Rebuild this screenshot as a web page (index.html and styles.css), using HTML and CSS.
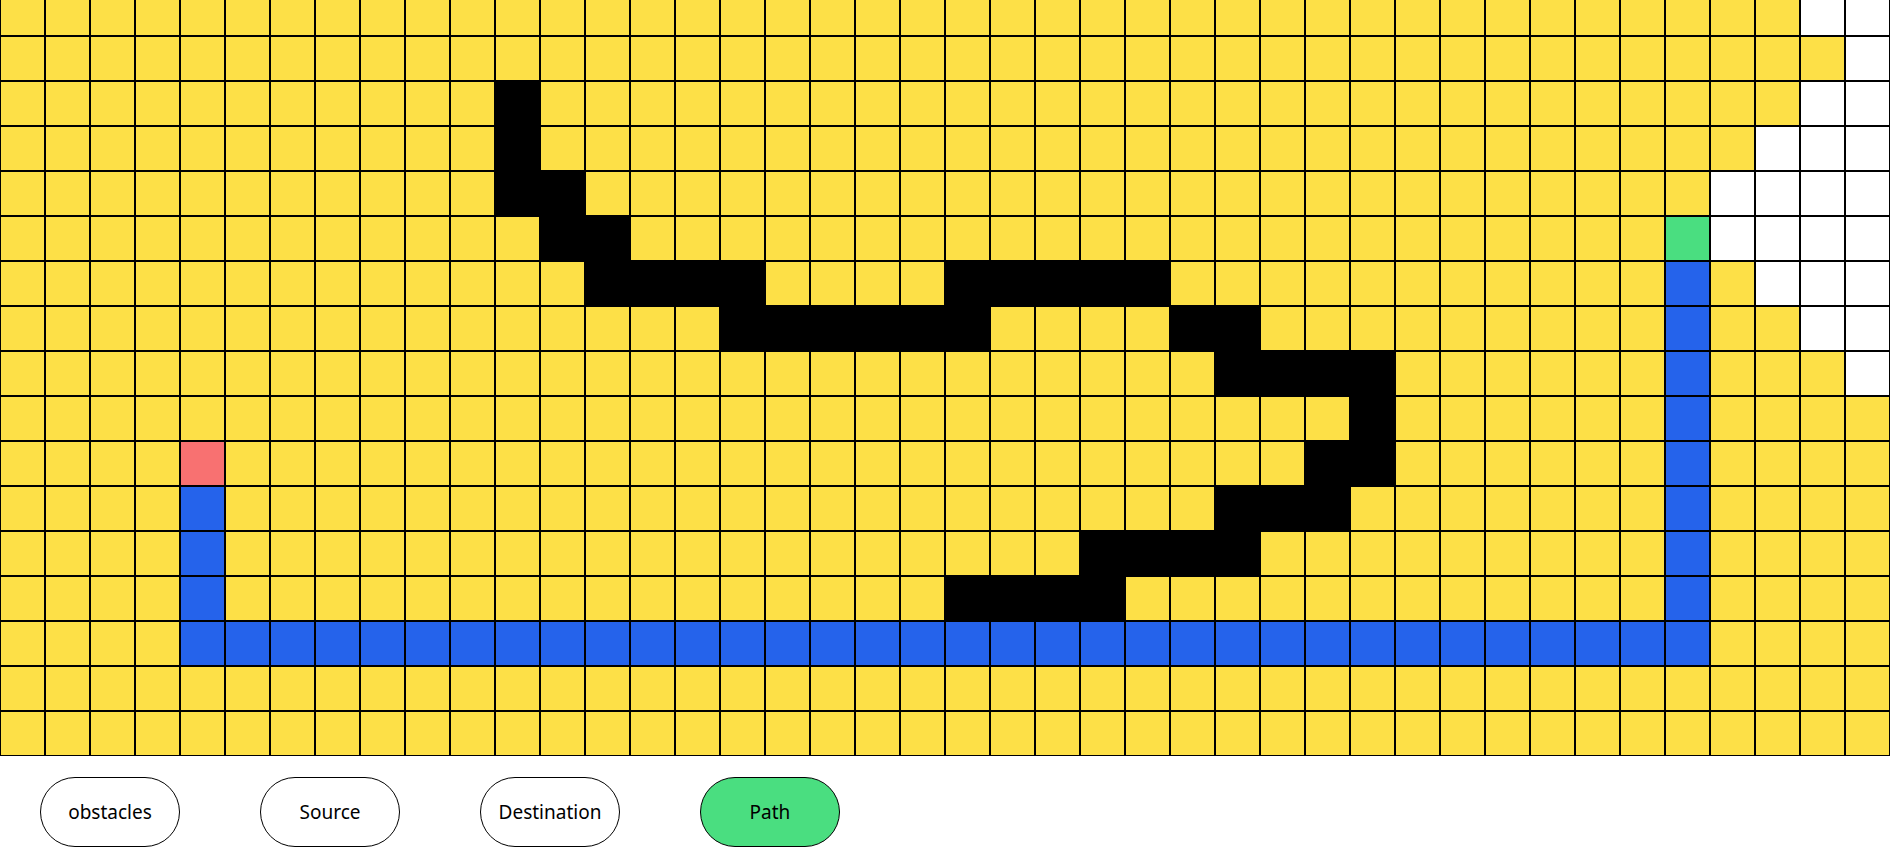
FILE: index.html
```html
<!DOCTYPE html>
<html lang="en">
<head>
<meta charset="utf-8">
<title>Path Finder</title>
<link rel="stylesheet" href="styles.css">
</head>
<body>
<main class="board">
<div class="row"><span></span><span></span><span></span><span></span><span></span><span></span><span></span><span></span><span></span><span></span>
<span></span><span></span><span></span><span></span><span></span><span></span><span></span><span></span><span></span><span></span>
<span></span><span></span><span></span><span></span><span></span><span></span><span></span><span></span><span></span><span></span>
<span></span><span></span><span></span><span></span><span></span><span></span><span></span><span></span><span></span><span></span>
<span class="empty"></span><span class="empty"></span></div>

<div class="row"><span></span><span></span><span></span><span></span><span></span><span></span><span></span><span></span><span></span><span></span>
<span></span><span></span><span></span><span></span><span></span><span></span><span></span><span></span><span></span><span></span>
<span></span><span></span><span></span><span></span><span></span><span></span><span></span><span></span><span></span><span></span>
<span></span><span></span><span></span><span></span><span></span><span></span><span></span><span></span><span></span><span></span>
<span></span><span class="empty"></span></div>

<div class="row"><span></span><span></span><span></span><span></span><span></span><span></span><span></span><span></span><span></span><span></span>
<span></span><span class="wall"></span><span></span><span></span><span></span><span></span><span></span><span></span><span></span><span></span>
<span></span><span></span><span></span><span></span><span></span><span></span><span></span><span></span><span></span><span></span>
<span></span><span></span><span></span><span></span><span></span><span></span><span></span><span></span><span></span><span></span>
<span class="empty"></span><span class="empty"></span></div>

<div class="row"><span></span><span></span><span></span><span></span><span></span><span></span><span></span><span></span><span></span><span></span>
<span></span><span class="wall"></span><span></span><span></span><span></span><span></span><span></span><span></span><span></span><span></span>
<span></span><span></span><span></span><span></span><span></span><span></span><span></span><span></span><span></span><span></span>
<span></span><span></span><span></span><span></span><span></span><span></span><span></span><span></span><span></span><span class="empty"></span>
<span class="empty"></span><span class="empty"></span></div>

<div class="row"><span></span><span></span><span></span><span></span><span></span><span></span><span></span><span></span><span></span><span></span>
<span></span><span class="wall"></span><span class="wall"></span><span></span><span></span><span></span><span></span><span></span><span></span><span></span>
<span></span><span></span><span></span><span></span><span></span><span></span><span></span><span></span><span></span><span></span>
<span></span><span></span><span></span><span></span><span></span><span></span><span></span><span></span><span class="empty"></span><span class="empty"></span>
<span class="empty"></span><span class="empty"></span></div>

<div class="row"><span></span><span></span><span></span><span></span><span></span><span></span><span></span><span></span><span></span><span></span>
<span></span><span></span><span class="wall"></span><span class="wall"></span><span></span><span></span><span></span><span></span><span></span><span></span>
<span></span><span></span><span></span><span></span><span></span><span></span><span></span><span></span><span></span><span></span>
<span></span><span></span><span></span><span></span><span></span><span></span><span></span><span class="target"></span><span class="empty"></span><span class="empty"></span>
<span class="empty"></span><span class="empty"></span></div>

<div class="row"><span></span><span></span><span></span><span></span><span></span><span></span><span></span><span></span><span></span><span></span>
<span></span><span></span><span></span><span class="wall"></span><span class="wall"></span><span class="wall"></span><span class="wall"></span><span></span><span></span><span></span>
<span></span><span class="wall"></span><span class="wall"></span><span class="wall"></span><span class="wall"></span><span class="wall"></span><span></span><span></span><span></span><span></span>
<span></span><span></span><span></span><span></span><span></span><span></span><span></span><span class="path"></span><span></span><span class="empty"></span>
<span class="empty"></span><span class="empty"></span></div>

<div class="row"><span></span><span></span><span></span><span></span><span></span><span></span><span></span><span></span><span></span><span></span>
<span></span><span></span><span></span><span></span><span></span><span></span><span class="wall"></span><span class="wall"></span><span class="wall"></span><span class="wall"></span>
<span class="wall"></span><span class="wall"></span><span></span><span></span><span></span><span></span><span class="wall"></span><span class="wall"></span><span></span><span></span>
<span></span><span></span><span></span><span></span><span></span><span></span><span></span><span class="path"></span><span></span><span></span>
<span class="empty"></span><span class="empty"></span></div>

<div class="row"><span></span><span></span><span></span><span></span><span></span><span></span><span></span><span></span><span></span><span></span>
<span></span><span></span><span></span><span></span><span></span><span></span><span></span><span></span><span></span><span></span>
<span></span><span></span><span></span><span></span><span></span><span></span><span></span><span class="wall"></span><span class="wall"></span><span class="wall"></span>
<span class="wall"></span><span></span><span></span><span></span><span></span><span></span><span></span><span class="path"></span><span></span><span></span>
<span></span><span class="empty"></span></div>

<div class="row"><span></span><span></span><span></span><span></span><span></span><span></span><span></span><span></span><span></span><span></span>
<span></span><span></span><span></span><span></span><span></span><span></span><span></span><span></span><span></span><span></span>
<span></span><span></span><span></span><span></span><span></span><span></span><span></span><span></span><span></span><span></span>
<span class="wall"></span><span></span><span></span><span></span><span></span><span></span><span></span><span class="path"></span><span></span><span></span>
<span></span><span></span></div>

<div class="row"><span></span><span></span><span></span><span></span><span class="source"></span><span></span><span></span><span></span><span></span><span></span>
<span></span><span></span><span></span><span></span><span></span><span></span><span></span><span></span><span></span><span></span>
<span></span><span></span><span></span><span></span><span></span><span></span><span></span><span></span><span></span><span class="wall"></span>
<span class="wall"></span><span></span><span></span><span></span><span></span><span></span><span></span><span class="path"></span><span></span><span></span>
<span></span><span></span></div>

<div class="row"><span></span><span></span><span></span><span></span><span class="path"></span><span></span><span></span><span></span><span></span><span></span>
<span></span><span></span><span></span><span></span><span></span><span></span><span></span><span></span><span></span><span></span>
<span></span><span></span><span></span><span></span><span></span><span></span><span></span><span class="wall"></span><span class="wall"></span><span class="wall"></span>
<span></span><span></span><span></span><span></span><span></span><span></span><span></span><span class="path"></span><span></span><span></span>
<span></span><span></span></div>

<div class="row"><span></span><span></span><span></span><span></span><span class="path"></span><span></span><span></span><span></span><span></span><span></span>
<span></span><span></span><span></span><span></span><span></span><span></span><span></span><span></span><span></span><span></span>
<span></span><span></span><span></span><span></span><span class="wall"></span><span class="wall"></span><span class="wall"></span><span class="wall"></span><span></span><span></span>
<span></span><span></span><span></span><span></span><span></span><span></span><span></span><span class="path"></span><span></span><span></span>
<span></span><span></span></div>

<div class="row"><span></span><span></span><span></span><span></span><span class="path"></span><span></span><span></span><span></span><span></span><span></span>
<span></span><span></span><span></span><span></span><span></span><span></span><span></span><span></span><span></span><span></span>
<span></span><span class="wall"></span><span class="wall"></span><span class="wall"></span><span class="wall"></span><span></span><span></span><span></span><span></span><span></span>
<span></span><span></span><span></span><span></span><span></span><span></span><span></span><span class="path"></span><span></span><span></span>
<span></span><span></span></div>

<div class="row"><span></span><span></span><span></span><span></span><span class="path"></span><span class="path"></span><span class="path"></span><span class="path"></span><span class="path"></span><span class="path"></span>
<span class="path"></span><span class="path"></span><span class="path"></span><span class="path"></span><span class="path"></span><span class="path"></span><span class="path"></span><span class="path"></span><span class="path"></span><span class="path"></span>
<span class="path"></span><span class="path"></span><span class="path"></span><span class="path"></span><span class="path"></span><span class="path"></span><span class="path"></span><span class="path"></span><span class="path"></span><span class="path"></span>
<span class="path"></span><span class="path"></span><span class="path"></span><span class="path"></span><span class="path"></span><span class="path"></span><span class="path"></span><span class="path"></span><span></span><span></span>
<span></span><span></span></div>

<div class="row"><span></span><span></span><span></span><span></span><span></span><span></span><span></span><span></span><span></span><span></span>
<span></span><span></span><span></span><span></span><span></span><span></span><span></span><span></span><span></span><span></span>
<span></span><span></span><span></span><span></span><span></span><span></span><span></span><span></span><span></span><span></span>
<span></span><span></span><span></span><span></span><span></span><span></span><span></span><span></span><span></span><span></span>
<span></span><span></span></div>

<div class="row"><span></span><span></span><span></span><span></span><span></span><span></span><span></span><span></span><span></span><span></span>
<span></span><span></span><span></span><span></span><span></span><span></span><span></span><span></span><span></span><span></span>
<span></span><span></span><span></span><span></span><span></span><span></span><span></span><span></span><span></span><span></span>
<span></span><span></span><span></span><span></span><span></span><span></span><span></span><span></span><span></span><span></span>
<span></span><span></span></div>
</main>

<nav class="controls">
  <button class="btn" type="button">obstacles</button>
  <button class="btn" type="button">Source</button>
  <button class="btn" type="button">Destination</button>
  <button class="btn btn-active" type="button">Path</button>
</nav>
</body>
</html>
```

FILE: styles.css
```css
html, body {
  margin: 0;
  padding: 0;
  background: #ffffff;
}

body {
  font-family: "Noto Sans", "Open Sans", Arial, sans-serif;
  color: #000;
}

.board {
  display: flex;
  flex-direction: column;
  margin-top: -9px;
  width: 1890px;
}

.row {
  display: flex;
  font-size: 0;
  line-height: 0;
}

.row span {
  flex: none;
  display: block;
  width: 45px;
  height: 45px;
  box-sizing: border-box;
  border: 1px solid #000;
  background: #fde047;
}

.row span.empty { background: #ffffff; }
.row span.wall { background: #000000; }
.row span.path { background: #2563eb; }
.row span.source { background: #f87171; }
.row span.target { background: #4ade80; }

.controls {
  display: flex;
  gap: 80px;
  padding-left: 40px;
  margin-top: 21px;
}

.btn {
  width: 140px;
  height: 70px;
  box-sizing: border-box;
  border: 1px solid #000;
  border-radius: 35px;
  background: #ffffff;
  color: #000;
  font-family: "Noto Sans", "Open Sans", Arial, sans-serif;
  font-size: 19px;
  padding: 0;
  cursor: pointer;
}

.btn-active {
  background: #4ade80;
}
```
